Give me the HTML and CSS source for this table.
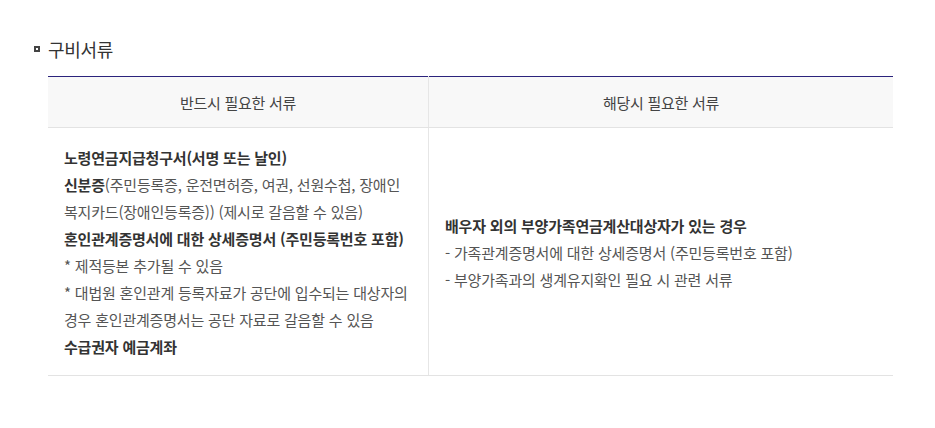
FILE: index.html
```html
<!DOCTYPE html>
<html lang="ko">
<head>
<meta charset="utf-8">
<link rel="stylesheet" href="styles.css">
</head>
<body>
<div class="wrap">
  <h3 class="title"><span class="bullet"></span>구비서류</h3>
  <table class="docs">
    <thead>
      <tr><th>반드시 필요한 서류</th><th>해당시 필요한 서류</th></tr>
    </thead>
    <tbody>
      <tr>
        <td>
          <p><b>노령연금지급청구서(서명 또는 날인)</b></p>
          <p><b>신분증</b>(주민등록증, 운전면허증, 여권, 선원수첩, 장애인 복지카드(장애인등록증)) (제시로 갈음할 수 있음)</p>
          <p><b>혼인관계증명서에 대한 상세증명서 (주민등록번호 포함)</b></p>
          <p>* 제적등본 추가될 수 있음</p>
          <p>* 대법원 혼인관계 등록자료가 공단에 입수되는 대상자의 경우 혼인관계증명서는 공단 자료로 갈음할 수 있음</p>
          <p><b>수급권자 예금계좌</b></p>
        </td>
        <td>
          <p><b>배우자 외의 부양가족연금계산대상자가 있는 경우</b></p>
          <p>- 가족관계증명서에 대한 상세증명서 (주민등록번호 포함)</p>
          <p>- 부양가족과의 생계유지확인 필요 시 관련 서류</p>
        </td>
      </tr>
    </tbody>
  </table>
</div>
</body>
</html>
```
FILE: styles.css
```css
html, body { margin: 0; padding: 0; background: #fff; }
body {
  font-family: "Noto Sans CJK KR", "Noto Sans", sans-serif;
  color: #555;
}
.wrap { padding: 37px 42px 0 34px; }
.title {
  display: flex;
  align-items: center;
  margin: 0 0 15px 0;
  font-size: 18px;
  font-weight: 400;
  color: #333;
  line-height: 24px;
  letter-spacing: -0.3px;
}
.bullet {
  width: 2px;
  height: 2px;
  border: 2px solid #444;
  background: #fff;
  margin-right: 8px;
}
.docs {
  margin-left: 14px;
  width: 845px;
  border-collapse: collapse;
  table-layout: fixed;
  border-top: 1px solid #2b237c;
}
.docs th {
  height: 50px;
  background: #f8f8f8;
  font-size: 15px;
  font-weight: 400;
  color: #444;
  border-bottom: 1px solid #e3e3e3;
  padding: 0;
  letter-spacing: -0.3px;
}
.docs th:first-child, .docs td:first-child { border-right: 1px solid #e6e6e6; width: 380px; }
.docs td {
  padding: 16px 16px 15px 16px;
  vertical-align: middle;
  font-size: 15px;
  line-height: 27px;
  border-bottom: 1px solid #e3e3e3;
  word-break: keep-all;
  letter-spacing: -0.2px;
}
.docs p { margin: 0; }
.docs b { font-weight: 700; color: #333; }
```
